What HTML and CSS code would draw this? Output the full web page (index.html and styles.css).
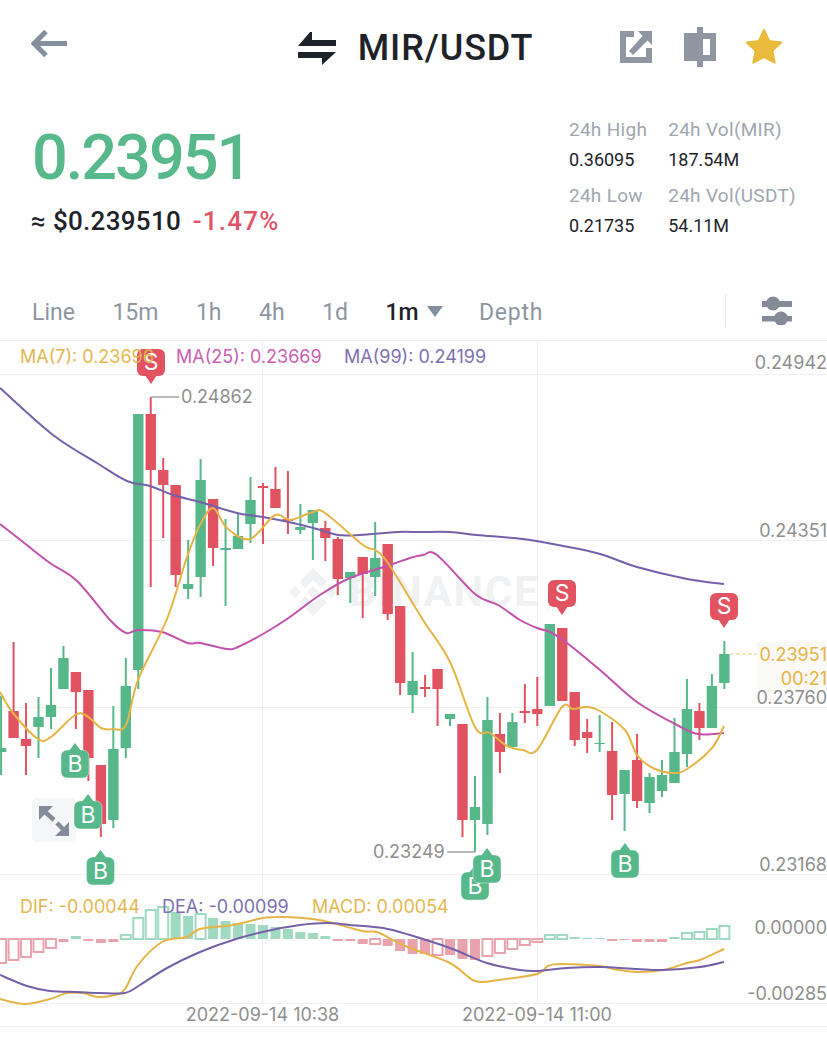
FILE: index.html
```html
<!DOCTYPE html>
<html lang="en">
<head>
  <meta charset="UTF-8" />
  <meta name="viewport" content="width=device-width, initial-scale=1.0" />
  <title>MIR/USDT</title>
  <link rel="stylesheet" href="styles.css">
</head>
<body>

  <header class="topbar">
    <svg class="icon-back" width="36" height="28" viewBox="0 0 36 28">
      <path d="M36 13.500H5M15 1.500L3 13.500l12 12" />
    </svg>
    <div class="pair">
      <svg width="38" height="33" viewBox="0 0 38 33">
        <path d="M12 0h2v8h24v6H0zM0 20h38L24 33v-7H0z" />
      </svg>
      <span>MIR/USDT</span>
    </div>
    <div class="actions">
      <svg width="32" height="32" viewBox="0 0 32 32" class="icon-grey">
        <path d="M0 0h14v6H6v20h20V17h6v15H0z" />
        <path d="M18 0h14v14l-4.500-4.500L13 24l-4-4L22.500 5z" />
      </svg>
      <svg width="32" height="40" viewBox="0 0 32 40" class="icon-grey">
        <path d="M13 0h6v6h13v28H19v6h-6v-6H0V6h13zM19 12v16h7V12z" />
      </svg>
      <svg width="36" height="36" viewBox="0 0 36 36" class="icon-star">
        <path d="M18 1l5.200 11 12 1.500-8.800 8.200 2.300 12L18 28l-10.700 5.700 2.300-12L.8 13.500l12-1.500z" />
      </svg>
    </div>
  </header>

  <section class="ticker">
    <div class="price">
      <div class="last">0.23951</div>
      <div class="fiat">&asymp; $0.239510 <span class="change">-1.47%</span></div>
    </div>
    <div class="stats">
      <div class="stat-col">
        <span class="stat-label">24h High</span>
        <span class="stat-value">0.36095</span>
        <span class="stat-label">24h Low</span>
        <span class="stat-value">0.21735</span>
      </div>
      <div class="stat-col">
        <span class="stat-label">24h Vol(MIR)</span>
        <span class="stat-value">187.54M</span>
        <span class="stat-label">24h Vol(USDT)</span>
        <span class="stat-value">54.11M</span>
      </div>
    </div>
  </section>

  <nav class="tabs">
    <a>Line</a>
    <a>15m</a>
    <a>1h</a>
    <a>4h</a>
    <a>1d</a>
    <a class="active">1m <i class="caret"></i></a>
    <a class="depth">Depth</a>
    <div class="tab-tools">
      <svg width="30" height="29" viewBox="0 0 30 29" class="icon-sliders">
        <path d="M0 5h30v6H0zM0 20h30v5.500H0z" />
        <circle cx="11" cy="7.500" r="7" />
        <circle cx="19" cy="22.500" r="7" />
      </svg>
    </div>
  </nav>

  <svg class="chart" width="827" height="701" viewBox="0 340 827 701">
    <g class="grid">
      <path d="M0 340.500H827M0 374.500H827M0 540.500H827M0 707.500H827M0 874.500H827M0 1003.500H827M0 1026.500H827" />
      <path d="M262.500 340V1003M537.500 340V1003" />
    </g>

    <g class="watermark">
      <path transform="translate(313 592)" d="M0-24L14-10 8-4 0-12-8-4-14-10zM-18-6L-12 0-18 6-24 0zM18-6L24 0 18 6 12 0zM0-6L6 0 0 6-6 0zM0 24L-14 10-8 4 0 12 8 4 14 10z" />
      <text x="349" y="606">BINANCE</text>
    </g>

    <g id="hist"></g>
    <g id="candles"></g>

    <polyline class="line ma99" points="0,388 53,435 97,463 127,481 150,486 173,495 200,502 237,513 263,517 293,523 317,529 338,535 360,535 397,532 420,532 450,532 477,535 523,539 563,546 600,554 637,567 687,579 724,584" />
    <polyline class="line ma25" points="0,524 23,542 50,563 77,581 110,620 126,633 138,630 162,632 188,643 200,643 227,649 238,647 263,634 287,619 320,595 350,578 390,565 410,558 423,555 437,555 475,594 498,605 520,620 537,628 550,632 567,643 600,670 637,702 677,725 698,734 724,733" />
    <polyline class="line ma7" points="0,692 13,713 38,739 51,737 75,715 87,716 101,728 113,729 126,725 138,680 167,619 187,557 200,525 213,508 227,528 250,539 275,515 290,520 313,512 325,513 363,545 375,550 388,563 423,620 450,662 475,727 490,733 507,746 523,750 537,750 562,707 573,709 587,707 600,711 625,730 637,755 653,768 673,773 687,769 712,748 724,726" />

    <polyline class="line dif" points="0,999 25,1004 50,999 67,993 83,993 98,997 115,995 125,989 138,965 162,942 187,937 200,929 233,925 263,918 287,917 313,919 333,923 362,931 377,932 393,940 410,948 450,963 475,981 498,980 537,974 548,966 562,964 600,966 613,969 637,972 663,970 687,963 700,960 724,949" />
    <polyline class="line dea" points="0,975 27,986 50,991 77,992 100,993 125,993 140,985 167,968 200,952 233,940 267,931 300,925 327,923 350,925 383,928 410,935 450,948 487,963 520,970 538,971 567,968 600,967 637,969 663,970 700,967 724,962" />

    <path class="leader" d="M151 397H179M447 852H475" />
    <text class="axis" x="181" y="403">0.24862</text>
    <text class="axis" x="373" y="858">0.23249</text>

    <text class="legend c-ma7" x="20" y="913">DIF: -0.00044</text>
    <text class="legend c-ma99" x="162" y="913">DEA: -0.00099</text>
    <text class="legend c-ma7" x="312" y="913">MACD: 0.00054</text>

    <rect class="last-box" x="757" y="642" width="70" height="50" />
    <path class="last-line" d="M730 654H757" />
    <text class="axis end c-last" x="827" y="661">0.23951</text>
    <text class="axis end c-last" x="827" y="685">00:21</text>
    <text class="axis end" x="827" y="369">0.24942</text>
    <text class="axis end" x="827" y="537">0.24351</text>
    <text class="axis end" x="827" y="704">0.23760</text>
    <text class="axis end" x="827" y="871">0.23168</text>
    <text class="axis end" x="827" y="934">0.00000</text>
    <text class="axis end" x="827" y="1000">-0.00285</text>
    <text class="axis mid" x="262.500" y="1021">2022-09-14 10:38</text>
    <text class="axis mid" x="537" y="1021">2022-09-14 11:00</text>

    <g class="expand">
      <rect x="32" y="798" width="44" height="44" rx="5" />
      <path d="M39 806h14l-14 14zM69 836H55l14-14z" />
      <path class="expand-stem" d="M44 811l10 9M57 823l7 7" />
    </g>

    <g class="mark sell" transform="translate(151 349)">
      <rect x="-14" y="0" width="28" height="27" rx="6" /><path d="M-6 26H6L0 35z" /><text y="21">S</text>
    </g>
    <g class="mark sell" transform="translate(562 580)">
      <rect x="-14" y="0" width="28" height="27" rx="6" /><path d="M-6 26H6L0 35z" /><text y="21">S</text>
    </g>
    <g class="mark sell" transform="translate(724 593)">
      <rect x="-14" y="0" width="28" height="27" rx="6" /><path d="M-6 26H6L0 35z" /><text y="21">S</text>
    </g>
    <g class="mark buy" transform="translate(75 743)">
      <rect x="-14" y="7" width="28" height="28" rx="6" /><path d="M-6 8H6L0 0z" /><text y="29">B</text>
    </g>
    <g class="mark buy" transform="translate(88 794)">
      <rect x="-14" y="7" width="28" height="28" rx="6" /><path d="M-6 8H6L0 0z" /><text y="29">B</text>
    </g>
    <g class="mark buy" transform="translate(100.500 850)">
      <rect x="-14" y="7" width="28" height="28" rx="6" /><path d="M-6 8H6L0 0z" /><text y="29">B</text>
    </g>
    <g class="mark buy" transform="translate(475 865)">
      <rect x="-14" y="7" width="28" height="28" rx="6" /><path d="M-6 8H6L0 0z" /><text y="29">B</text>
    </g>
    <g class="mark buy" transform="translate(487 848)">
      <rect x="-14" y="7" width="28" height="28" rx="6" /><path d="M-6 8H6L0 0z" /><text y="29">B</text>
    </g>
    <g class="mark buy" transform="translate(625 843)">
      <rect x="-14" y="7" width="28" height="28" rx="6" /><path d="M-6 8H6L0 0z" /><text y="29">B</text>
    </g>

    <!-- legend sits on top of the S marker -->
    <text class="legend c-ma7" x="20" y="363">MA(7): 0.23696</text>
    <text class="legend c-ma25" x="176" y="363">MA(25): 0.23669</text>
    <text class="legend c-ma99" x="344" y="363">MA(99): 0.24199</text>
  </svg>

  <script src="chart.js"></script>
</body>
</html>
```

FILE: styles.css
```css
html, body {
  margin: 0;
  height: 1041px;
  overflow: hidden;
}
body {
  font-family: Roboto, sans-serif;
  background: #fff;
  color: #1e2329;
}
svg {
  display: block;
}

/* top bar */
.topbar {
  display: grid;
  grid-template-columns: 1fr auto 1fr;
  align-items: center;
  height: 96px;
  padding: 0 45px 0 30px;
  box-sizing: border-box;
}
.icon-back {
  fill: none;
  stroke: #848e9c;
  stroke-width: 5;
  margin: -8px 0 0 1px;
}
.pair {
  display: flex;
  align-items: center;
  gap: 22px;
  margin-left: 19px;
  font-size: 36px;
  font-weight: 500;
  letter-spacing: .9px;
  fill: #1e2329;
}
.actions {
  display: flex;
  align-items: center;
  justify-content: flex-end;
  gap: 32px;
  margin-top: -3px;
}
.icon-grey {
  fill: #8f96a2;
}
.icon-sliders {
  fill: #858c98;
}
.icon-star {
  fill: #e9ba3c;
  stroke: #e9ba3c;
  stroke-width: 2;
  stroke-linejoin: round;
  margin-left: -2px;
}

/* price + 24h stats */
.ticker {
  display: flex;
  justify-content: space-between;
  height: 178px;
  padding: 22px 31px 0 31px;
  box-sizing: border-box;
}
.last {
  font-size: 63px;
  font-weight: 500;
  line-height: 74px;
  letter-spacing: -2px;
  color: #57b88b;
  margin: 3px 0 0 1px;
}
.fiat {
  font-size: 26px;
  font-weight: 500;
  line-height: 34px;
  letter-spacing: .3px;
  margin-top: 9px;
}
.change {
  color: #e05565;
  margin-left: 5px;
  letter-spacing: 1.200px;
}
.stats {
  display: flex;
  gap: 21px;
}
.stat-col {
  display: flex;
  flex-direction: column;
}
.stat-label {
  font-size: 19px;
  line-height: 24px;
  letter-spacing: .3px;
  color: #a0a6af;
  margin-top: 12px;
  margin-bottom: 6px;
}
.stat-value {
  font-size: 18px;
  line-height: 24px;
}
.stat-label:first-child {
  margin-top: 0;
}

/* interval tabs */
.tabs {
  display: flex;
  align-items: center;
  gap: 37.500px;
  height: 66px;
  padding: 11px 32px 0;
  box-sizing: border-box;
  font-size: 23px;
  color: #8e95a0;
}
.tabs .active {
  color: #1e2329;
  font-weight: 500;
  margin-right: -2px;
}
.tabs .depth {
  letter-spacing: .8px;
}
.caret {
  display: inline-block;
  width: 0;
  height: 0;
  margin-left: 3px;
  vertical-align: 3px;
  border-left: 8px solid transparent;
  border-right: 8px solid transparent;
  border-top: 11px solid #848e9c;
}
.tab-tools {
  margin-left: auto;
  margin-right: 3px;
  margin-top: -4px;
  padding-left: 36px;
  height: 33px;
  display: flex;
  align-items: center;
  border-left: 1px solid #eceef0;
}

/* chart canvas */
.grid path {
  fill: none;
  stroke: #eff0f2;
  stroke-width: 1;
}
.watermark {
  fill: #f0f1f2;
}
.watermark text {
  font: 700 42px Roboto, sans-serif;
  letter-spacing: 1.800px;
}
.line {
  fill: none;
  stroke-width: 2;
  stroke-linejoin: round;
}
.ma7, .dif { stroke: #e6b445; }
.ma25 { stroke: #c352a9; }
.ma99, .dea { stroke: #7561a9; }

.legend {
  font: 400 18px Inter, sans-serif;
}
.c-ma7 { fill: #e4b74f; }
.c-ma25 { fill: #cc60b6; }
.c-ma99 { fill: #7d70b3; }

.axis {
  font: 400 18px Inter, sans-serif;
  fill: #8e8e8e;
}
.axis.end { text-anchor: end; }
.axis.mid { text-anchor: middle; }
.axis.c-last { fill: #e6b445; }
.leader {
  fill: none;
  stroke: #a3a3a3;
  stroke-width: 1.500;
}
.last-box { fill: #faf9f5; }
.last-line {
  fill: none;
  stroke: #f0dfa8;
  stroke-width: 1.500;
  stroke-dasharray: 4 2;
}

.expand rect { fill: #f5f6f7; }
.expand path { fill: #858c98; }
.expand .expand-stem {
  fill: none;
  stroke: #858c98;
  stroke-width: 4.500;
}

.mark text {
  font: 400 23px Inter, sans-serif;
  fill: #fff;
  text-anchor: middle;
}
.sell { fill: #e15361; }
.buy { fill: #57b88b; }
.buy rect {
  stroke: #fff;
  stroke-opacity: .4;
}

/* drawn by chart.js */
.body-g { fill: #56b78a; }
.body-r { fill: #e25362; }
.wick-g { stroke: #56b78a; stroke-width: 2; }
.wick-r { stroke: #e25362; stroke-width: 2; }
.bar-g { fill: #a0d9c2; }
.bar-r { fill: #e9a3ae; }
.hollow { fill: #fff; stroke-width: 2; }
.hollow.bar-g { stroke: #a0d9c2; }
.hollow.bar-r { stroke: #e9a3ae; }
```

FILE: chart.js
```js
// candle x = 1.1 + 12.47 * i, values are y pixels on the page
// [wick top, body top, body bottom, wick bottom, colour]
const candles = [
  [696,748,752,775,'g'],[642,711,738,738,'r'],[703,739,746,775,'r'],[697,717,727,758,'g'],
  [668,705,717,729,'g'],[646,658,689,689,'g'],[672,672,692,729,'r'],[690,690,758,781,'r'],
  [765,765,824,837,'r'],[706,749,820,828,'g'],[658,686,748,758,'g'],[414,414,670,689,'g'],
  [397,414,470,587,'r'],[458,470,485,538,'r'],[485,485,575,587,'r'],[540,584,589,599,'g'],
  [459,480,577,597,'g'],[499,499,548,566,'r'],[519,548,550,606,'g'],[513,536,549,549,'g'],
  [477,500,524,543,'g'],[483,486,488,544,'r'],[467,489,508,508,'r'],[471,519,521,534,'r'],
  [504,527,530,534,'g'],[510,510,523,560,'g'],[521,528,538,561,'r'],[537,539,579,595,'r'],
  [572,572,578,603,'g'],[557,557,574,618,'r'],[522,558,577,596,'g'],[544,544,614,620,'r'],
  [606,606,683,695,'r'],[652,681,695,713,'g'],[675,687,689,697,'r'],[669,669,689,726,'r'],
  [714,714,719,726,'g'],[724,724,820,837,'r'],[776,807,820,852,'g'],[697,720,824,835,'g'],
  [713,734,752,773,'r'],[713,722,747,747,'g'],[684,711,713,723,'r'],[677,709,714,726,'r'],
  [624,624,706,706,'g'],[628,628,701,701,'r'],[692,692,740,746,'r'],[719,732,738,753,'r'],
  [715,743,744,752,'g'],[722,751,795,820,'r'],[770,770,794,831,'g'],[734,760,801,808,'r'],
  [773,777,803,813,'g'],[760,775,791,797,'g'],[718,752,783,783,'g'],[679,709,754,767,'g'],
  [703,711,728,740,'r'],[674,686,728,728,'g'],[641,654,683,689,'g']
];

// macd bars: [y end, hollow], baseline is 939
const bars = [
  [963,1],[960,1],[957,1],[952,1],[948,1],[942,0],[936,0],[941,0],[943,0],[942,0],
  [935,1],[918,1],[910,1],[907,1],[912,0],[916,0],[914,1],[918,0],[921,0],[923,0],
  [924,0],[925,0],[927,0],[929,0],[932,0],[933,0],[936,0],[941,0],[941,0],[944,0],
  [944,1],[946,0],[951,0],[954,0],[954,0],[955,1],[955,0],[959,0],[960,0],[956,1],
  [953,1],[949,1],[945,1],[942,1],[935,1],[935,1],[937,0],[938,0],[938,0],[941,0],
  [940,0],[942,0],[942,0],[942,0],[937,0],[933,1],[932,1],[929,1],[926,1]
];

const NS = 'http://www.w3.org/2000/svg';
const xOf = i => 1.1 + 12.47 * i;

function add(parent, tag, cls, attrs) {
  const el = document.createElementNS(NS, tag);
  el.setAttribute('class', cls);
  for (const k in attrs) el.setAttribute(k, attrs[k]);
  parent.appendChild(el);
  return el;
}

const candleGroup = document.getElementById('candles');
candles.forEach((c, i) => {
  const x = xOf(i);
  add(candleGroup, 'line', 'wick-' + c[4], { x1: x, x2: x, y1: c[0], y2: c[3] });
  add(candleGroup, 'rect', 'body-' + c[4], { x: x - 5.2, y: c[1], width: 10.4, height: c[2] - c[1] });
});

const histGroup = document.getElementById('hist');
bars.forEach((b, i) => {
  const up = b[0] < 939;
  const top = up ? b[0] : 939;
  const cls = (up ? 'bar-g' : 'bar-r') + (b[1] ? ' hollow' : '');
  add(histGroup, 'rect', cls, { x: xOf(i) - 5, y: top, width: 10, height: Math.abs(b[0] - 939) });
});

// round off the moving average polylines
document.querySelectorAll('polyline.line').forEach(line => {
  const p = line.getAttribute('points').split(' ').map(s => s.split(',').map(Number));
  let d = 'M' + p[0];
  for (let i = 0; i < p.length - 1; i++) {
    const a = p[i - 1] || p[i], b = p[i], c = p[i + 1], e = p[i + 2] || c;
    const c1 = [b[0] + (c[0] - a[0]) / 6, b[1] + (c[1] - a[1]) / 6];
    const c2 = [c[0] - (e[0] - b[0]) / 6, c[1] - (e[1] - b[1]) / 6];
    d += 'C' + c1 + ' ' + c2 + ' ' + c;
  }
  const path = add(line.parentNode, 'path', line.getAttribute('class'), { d: d });
  line.replaceWith(path);
});
```
